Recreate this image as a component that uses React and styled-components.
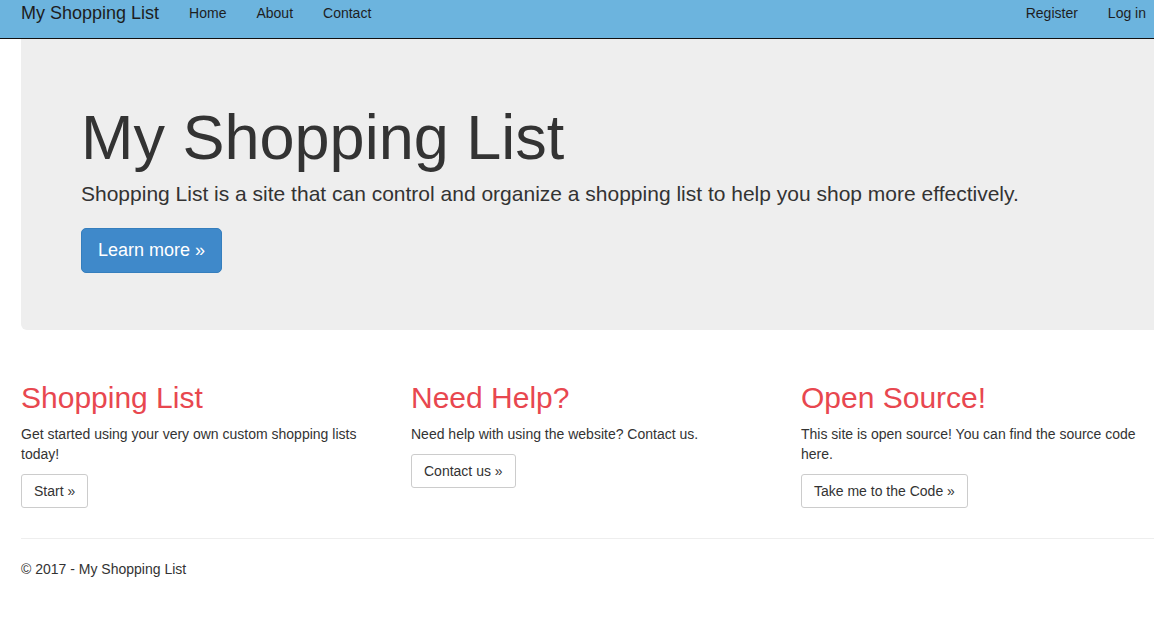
import React from "react";
import styled, { createGlobalStyle } from "styled-components";

const Global = createGlobalStyle`
  html, body { margin: 0; padding: 0; overflow-x: hidden; background: #fff; }
  body {
    font-family: "Liberation Sans", Arial, Helvetica, sans-serif;
    font-size: 14px;
    line-height: 20px;
    color: #333;
  }
  * { box-sizing: border-box; }
`;

const Navbar = styled.nav`
  background: #6cb4de;
  border-bottom: 1px solid #111;
  height: 39px;
`;

const NavInner = styled.div`
  width: 1170px;
  margin-left: 6px;
  padding: 0 15px;
  display: flex;
  align-items: flex-start;
`;

const Brand = styled.a`
  font-size: 18px;
  line-height: 20px;
  color: #1d1d1d;
  padding: 3px 15px 0 0;
  text-decoration: none;
`;

const NavList = styled.ul`
  list-style: none;
  margin: 0 ${(p) => (p.$right ? "0 0 auto" : "0")};
  padding: 0;
  display: flex;
`;

const NavLink = styled.a`
  display: block;
  padding: 3px 15px 0;
  font-size: 14px;
  line-height: 20px;
  color: #1e1e1e;
  text-decoration: none;
`;

const Container = styled.div`
  width: 1140px;
  margin-left: 21px;
`;

const Jumbotron = styled.div`
  background: #eeeeee;
  padding: 46px 60px 57px;
  border-radius: 0 0 6px 6px;
  margin-bottom: 30px;
`;

const Title = styled.h1`
  font-size: 63px;
  line-height: 69px;
  font-weight: 400;
  color: #333;
  margin: 18px 0 7px;
`;

const Lead = styled.p`
  font-size: 21px;
  line-height: 30px;
  margin: 0 0 19px;
  color: #333;
`;

const ButtonRow = styled.div`
  display: flex;
`;

const Button = styled.a`
  display: inline-block;
  font-size: ${(p) => (p.$large ? "18px" : "14px")};
  line-height: ${(p) => (p.$large ? "23px" : "20px")};
  padding: ${(p) => (p.$large ? "10px 16px" : "6px 12px")};
  border-radius: ${(p) => (p.$large ? "5px" : "3px")};
  border: 1px solid ${(p) => (p.$primary ? "#357ebd" : "#ccc")};
  background: ${(p) => (p.$primary ? "#3f89ca" : "#fff")};
  color: ${(p) => (p.$primary ? "#fff" : "#333")};
  text-decoration: none;
  white-space: nowrap;
`;

const Row = styled.div`
  display: grid;
  grid-template-columns: repeat(3, 1fr);
  margin: 0 -15px;
`;

const Col = styled.div`
  padding: 0 15px;
`;

const Heading = styled.h2`
  font-size: 30px;
  line-height: 33px;
  font-weight: 400;
  color: #e8474f;
  margin: 21px 0 10px;
`;

const Text = styled.p`
  margin: 0 0 10px;
  font-size: 14px;
  line-height: 20px;
`;

const Rule = styled.hr`
  border: 0;
  border-top: 1px solid #eee;
  margin: 30px 0 20px;
`;

const Footer = styled.footer`
  font-size: 14px;
  line-height: 20px;
`;

const columns = [
  {
    title: "Shopping List",
    text: "Get started using your very own custom shopping lists today!",
    button: "Start »",
  },
  {
    title: "Need Help?",
    text: "Need help with using the website? Contact us.",
    button: "Contact us »",
  },
  {
    title: "Open Source!",
    text: "This site is open source! You can find the source code here.",
    button: "Take me to the Code »",
  },
];

export default function App() {
  return (
    <>
      <Global />
      <Navbar>
        <NavInner>
          <Brand href="#">My Shopping List</Brand>
          <NavList>
            <li><NavLink href="#">Home</NavLink></li>
            <li><NavLink href="#">About</NavLink></li>
            <li><NavLink href="#">Contact</NavLink></li>
          </NavList>
          <NavList $right>
            <li><NavLink href="#">Register</NavLink></li>
            <li><NavLink href="#">Log in</NavLink></li>
          </NavList>
        </NavInner>
      </Navbar>
      <Container>
        <Jumbotron>
          <Title>My Shopping List</Title>
          <Lead>
            Shopping List is a site that can control and organize a shopping list to help you shop more effectively.
          </Lead>
          <ButtonRow>
            <Button href="#" $primary $large>Learn more »</Button>
          </ButtonRow>
        </Jumbotron>
        <Row>
          {columns.map((c) => (
            <Col key={c.title}>
              <Heading>{c.title}</Heading>
              <Text>{c.text}</Text>
              <ButtonRow>
                <Button href="#">{c.button}</Button>
              </ButtonRow>
            </Col>
          ))}
        </Row>
        <Rule />
        <Footer>© 2017 - My Shopping List</Footer>
      </Container>
    </>
  );
}
